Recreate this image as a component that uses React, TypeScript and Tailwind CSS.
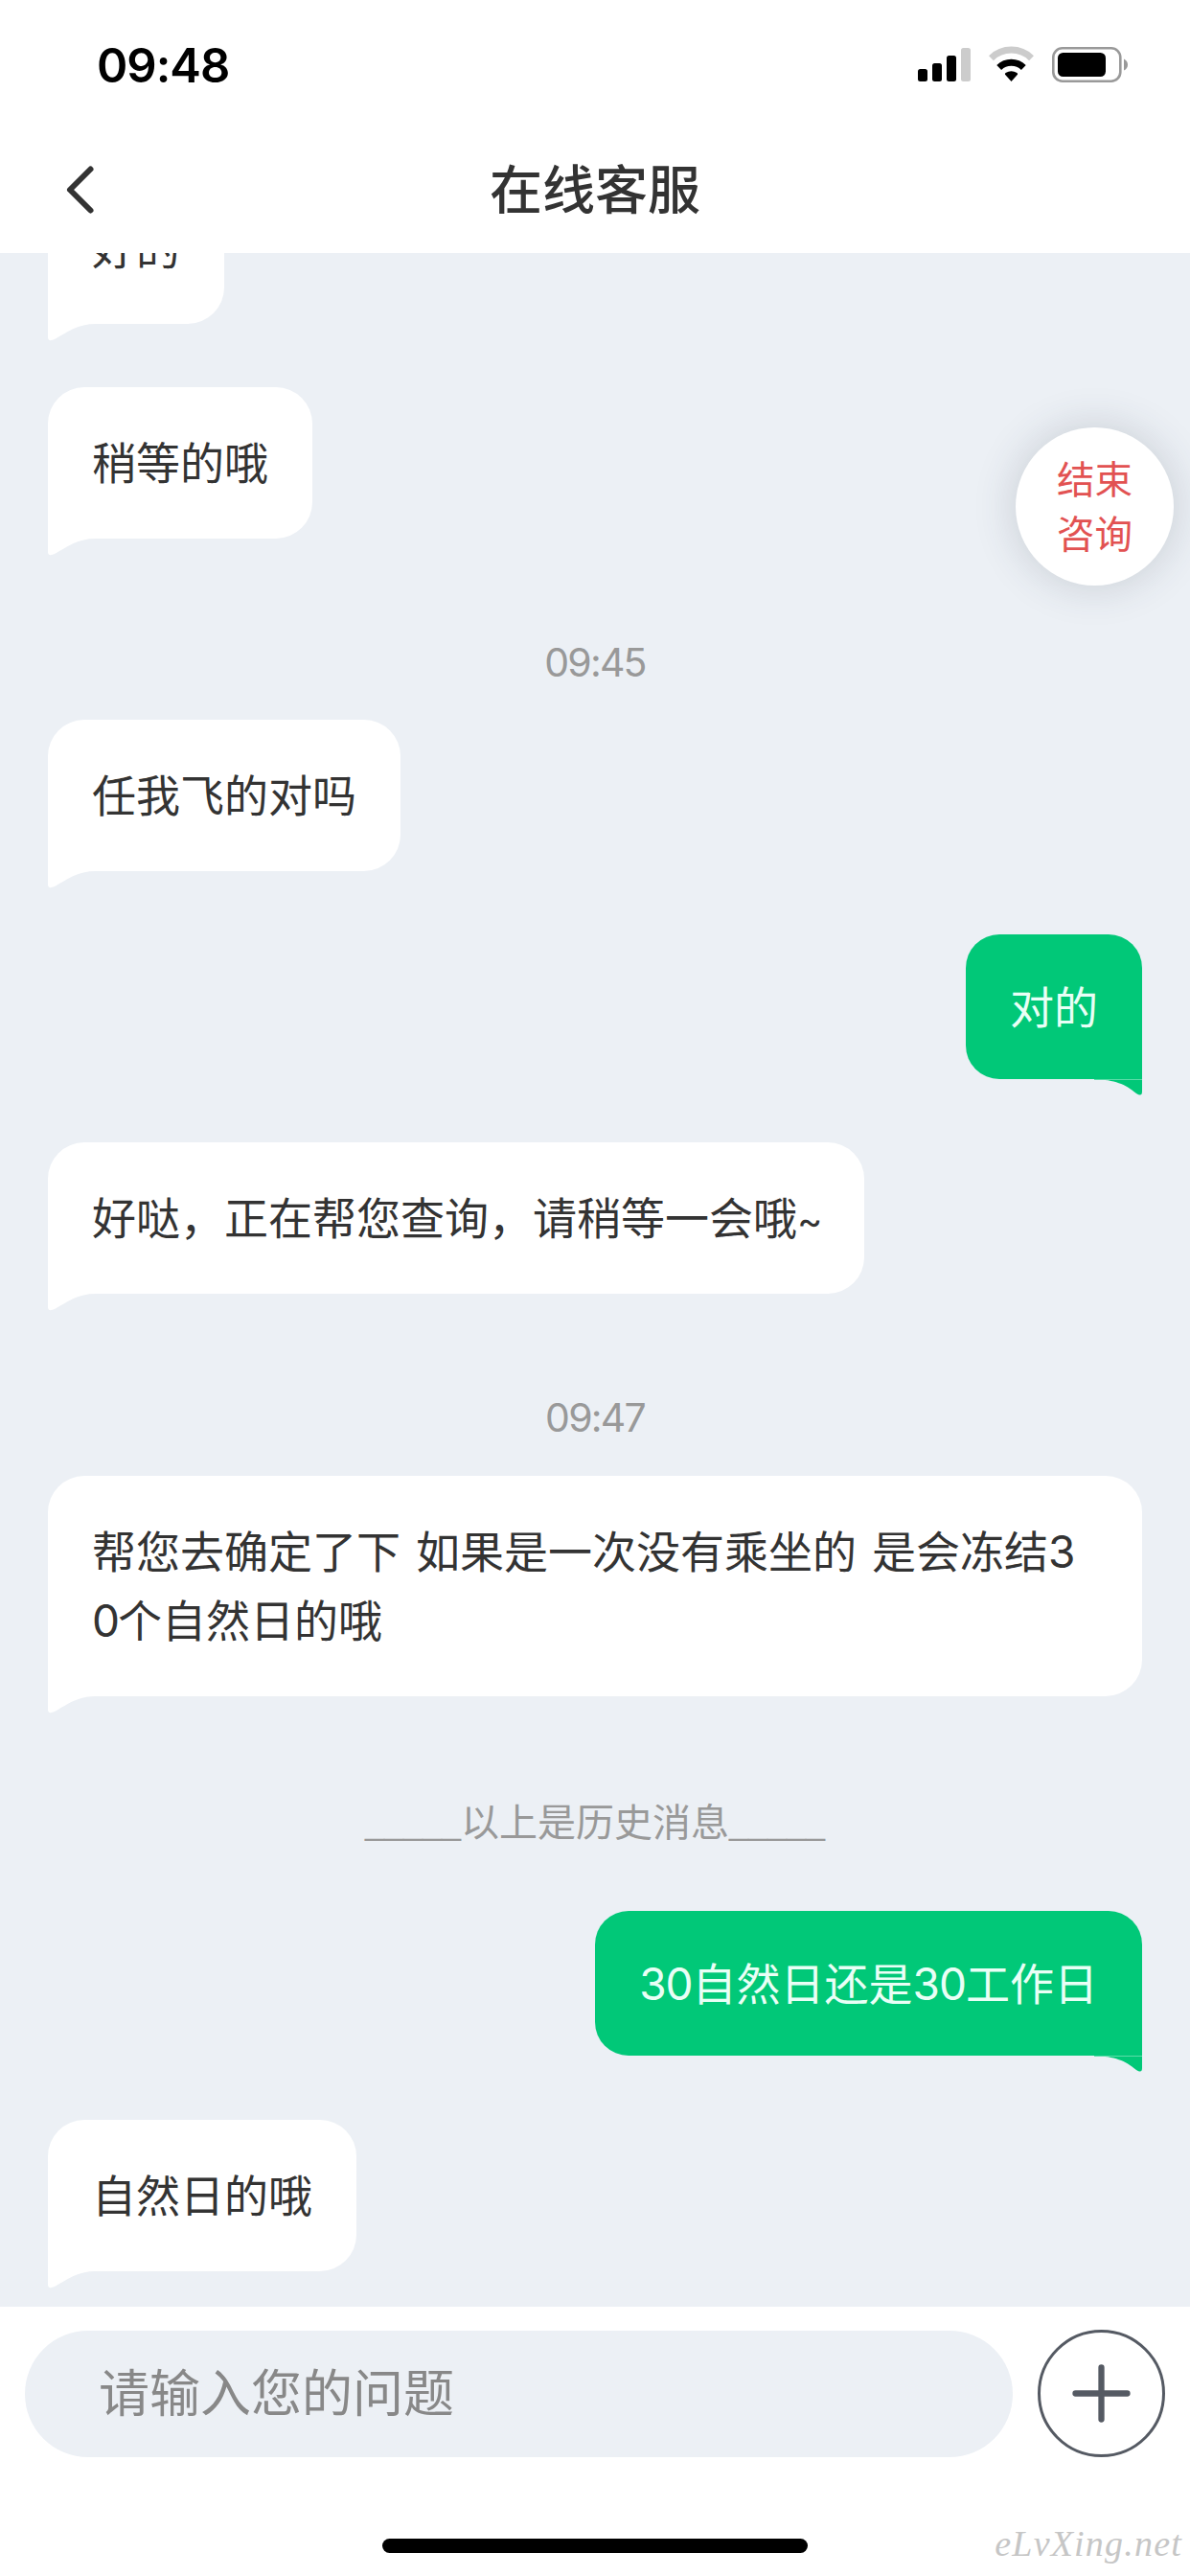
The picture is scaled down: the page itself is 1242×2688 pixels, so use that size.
import React from "react";

type Side = "left" | "right";

function Bubble({ side, className = "", children }: { side: Side; className?: string; children: React.ReactNode }) {
  if (side === "left") {
    return (
      <div
        className={`relative w-fit shrink-0 self-start whitespace-pre rounded-[38px] rounded-bl-none bg-white px-[46px] py-[43px] text-[46px] leading-[72px] text-[#333333] ${className}`}
      >
        {children}
        <svg className="absolute left-0 top-full -mt-px" width="50" height="19" viewBox="0 0 50 19" fill="none">
          <path d="M0 0H50V1C31 1 21 9 7 17Q0 20 0 15Z" fill="#fff" />
        </svg>
      </div>
    );
  }
  return (
    <div
      className={`relative w-fit shrink-0 self-end whitespace-pre rounded-[35px] rounded-br-none bg-[#01c878] px-[46px] pb-[39px] pt-[40px] text-[46px] leading-[72px] text-[#e9fff6] ${className}`}
    >
      {children}
      <svg className="absolute right-0 top-full" width="50" height="17" viewBox="0 0 50 17" fill="none">
        <path d="M0 0H50V13Q50 19 44 15C32 5 22 1 0 0Z" fill="#01c878" />
        <path d="M0 .5H50" stroke="#5bdca8" strokeWidth="1" />
      </svg>
    </div>
  );
}

function Note({ className = "", children }: { className?: string; children: React.ReactNode }) {
  return <div className={`shrink-0 self-center text-[#999999] ${className}`}>{children}</div>;
}

function Rule() {
  return <span className="font-['Liberation_Sans',sans-serif] text-[36px]">_____</span>;
}

function StatusBar() {
  return (
    <div className="flex h-[132px] items-start justify-between pl-[101px] pr-[64px]">
      <div className="mt-[38px] text-[49px] font-semibold leading-[62px] tracking-[-1px] text-black">09:48</div>
      <svg className="mt-[48px]" width="220" height="40" viewBox="0 0 220 40" fill="none">
        <rect x="0" y="24" width="10" height="13" rx="2.5" fill="#000" />
        <rect x="15" y="18" width="10" height="19" rx="2.5" fill="#000" />
        <rect x="30" y="10" width="10" height="27" rx="2.5" fill="#000" />
        <rect x="45" y="2" width="10" height="35" rx="2.5" fill="#ccc" />
        <path d="M76.5 12.7A30 30 0 0 1 118.5 12.7" stroke="#ccc" strokeWidth="7" />
        <path d="M84.7 22.5A18.5 18.5 0 0 1 110.3 22.5" stroke="#000" strokeWidth="7" />
        <path d="M97.5 37L91 29.7Q90.6 28.5 91.6 27.9Q97.5 24.5 103.4 27.9Q104.4 28.5 104 29.7Z" fill="#000" />
        <rect x="141.3" y="2.3" width="70" height="34.4" rx="9.5" stroke="#999" strokeWidth="2.6" />
        <rect x="146" y="7" width="50" height="25" rx="5.5" fill="#000" />
        <path d="M215 13.5Q219 15.5 219 19.5T215 25.5Z" fill="#999" />
      </svg>
    </div>
  );
}

export default function App() {
  return (
    <div className="relative flex h-[2688px] w-[1242px] flex-col overflow-hidden bg-white font-['Inter','Noto_Sans_CJK_SC',sans-serif]">
      <header className="h-[264px] shrink-0 bg-white">
        <StatusBar />
        <div className="relative flex h-[132px] items-center justify-center">
          <svg className="absolute left-[66px] top-[39px]" width="36" height="54" viewBox="0 0 36 54" fill="none">
            <path d="M28.5 5.5L7 27L28.5 48.5" stroke="#333" strokeWidth="6" strokeLinecap="round" strokeLinejoin="round" />
          </svg>
          <h1 className="text-[55px] font-medium leading-[72px] text-[#333333]">在线客服</h1>
        </div>
      </header>

      <main className="flex h-[2143px] shrink-0 flex-col overflow-hidden bg-[#ecf0f5] px-[50px]">
        <Bubble side="left" className="-mt-[84px]">好的</Bubble>
        <Bubble side="left" className="mt-[66px]">稍等的哦</Bubble>
        <Note className="mt-[101px] text-[41px] leading-[56px] tracking-[-1.8px]">09:45</Note>
        <Bubble side="left" className="mt-[32px]">任我飞的对吗</Bubble>
        <Bubble side="right" className="mt-[66px]">对的</Bubble>
        <Bubble side="left" className="mt-[66px]">
          好哒，正在帮您查询，请稍等一会哦<span className="text-[40px] leading-none tracking-[-2.5px]">~</span>
        </Bubble>
        <Note className="mt-[101px] text-[41px] leading-[56px] tracking-[-1.8px]">09:47</Note>
        <Bubble side="left" className="mt-[33px] min-w-full [word-spacing:3px]">
          {"帮您去确定了下 如果是一次没有乘坐的 是会冻结3\n"}
          <span className="tracking-[-2px]">0</span>个自然日的哦
        </Bubble>
        <Note className="mt-[102px] flex text-[40px] leading-[60px]">
          <Rule />
          <span>以上是历史消息</span>
          <Rule />
        </Note>
        <Bubble side="right" className="mt-[62px]">
          <span className="tracking-[-1px]">30</span>自然日还是<span className="tracking-[-1px]">30</span>工作日
        </Bubble>
        <Bubble side="left" className="mt-[67px]">自然日的哦</Bubble>
      </main>

      <footer className="flex h-[281px] shrink-0 flex-col items-center bg-white">
        <div className="flex w-full items-center gap-[26px] pl-[26px] pr-[26px] pt-[24px]">
          <div className="flex h-[132px] flex-1 items-center rounded-full bg-[#ecf0f5] pl-[77px] pt-[3px] text-[53px] text-[#888888]">
            请输入您的问题
          </div>
          <button className="size-[133px] shrink-0" aria-label="更多">
            <svg width="133" height="133" viewBox="0 0 133 133" fill="none">
              <circle cx="66.5" cy="66.5" r="65" stroke="#555a63" strokeWidth="3" />
              <path d="M66.5 39.5V93.5M39.5 66.5H93.5" stroke="#555a63" strokeWidth="6.3" strokeLinecap="round" />
            </svg>
          </button>
        </div>
        <div className="mt-[85px] h-[15px] w-[444px] rounded-full bg-black" />
      </footer>

      <button className="absolute left-[1060px] top-[446px] flex size-[165px] flex-col items-center justify-center rounded-full bg-white pt-[2px] text-[39.5px] leading-[57px] text-[#e25252] shadow-[0_0_45px_rgba(50,60,80,0.2)]">
        <span>结束</span>
        <span>咨询</span>
      </button>

      <div className="absolute right-[8px] top-[2632px] font-['Liberation_Serif',serif] text-[38px] italic leading-[44px] tracking-[1.2px] text-[#c6c6c6]">
        eLvXing.net
      </div>
    </div>
  );
}
